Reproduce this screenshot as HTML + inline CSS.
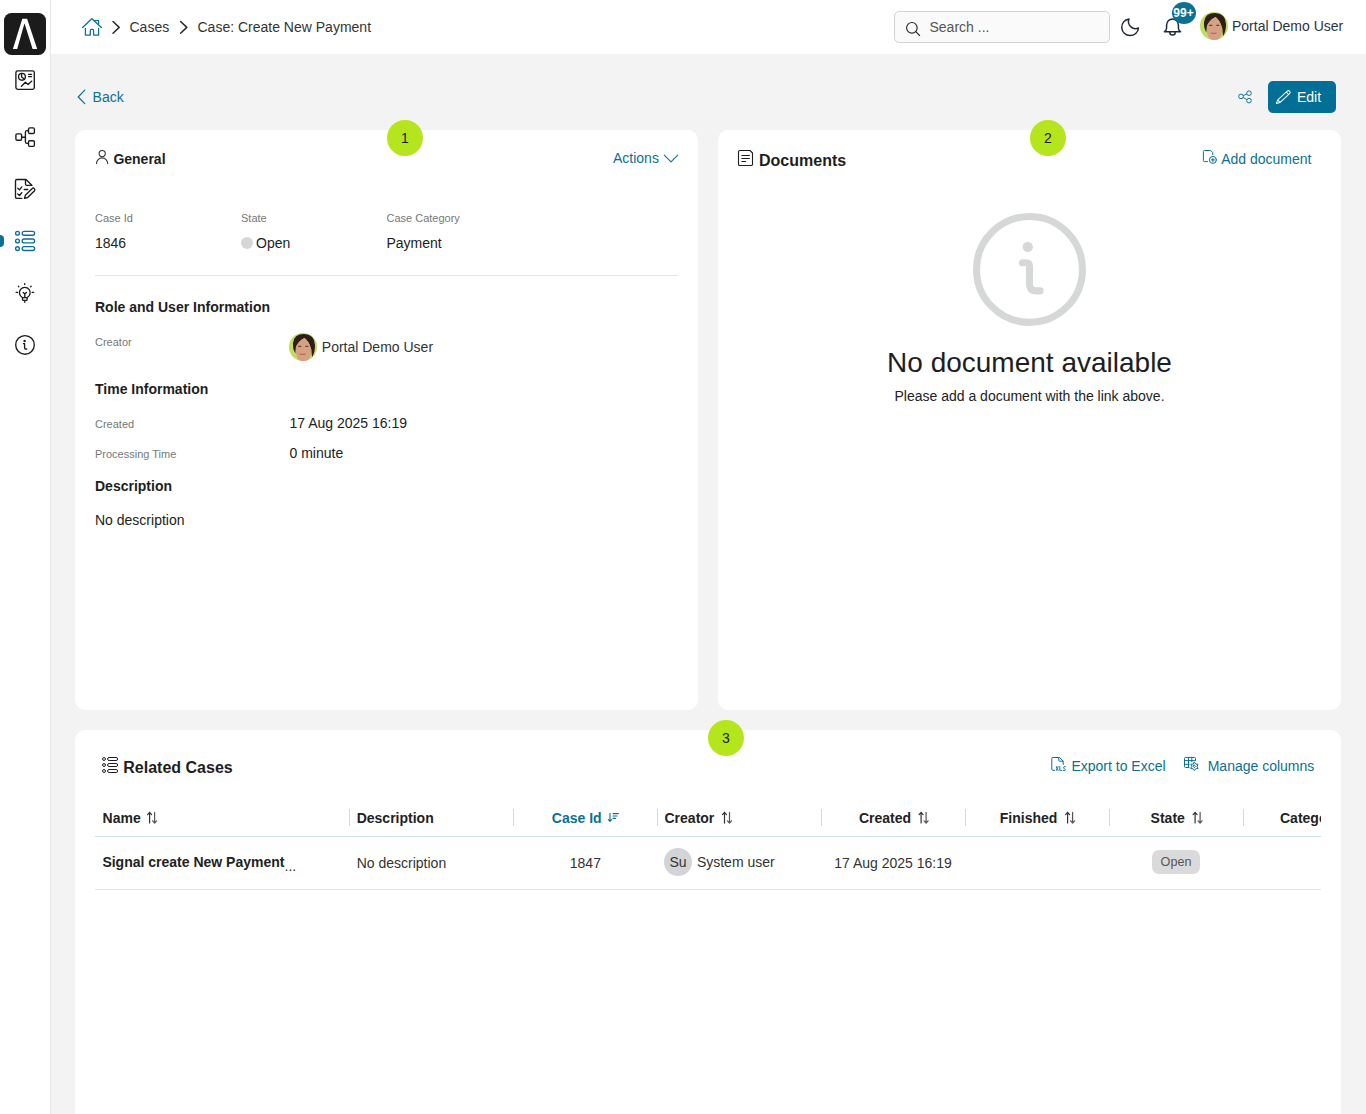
<!DOCTYPE html>
<html><head><meta charset="utf-8">
<style>
*{box-sizing:border-box;margin:0;padding:0}
html,body{width:1366px;height:1114px;overflow:hidden}
body{background:#f3f3f3;font-family:"Liberation Sans",sans-serif;color:#222;position:relative}
.a{position:absolute;white-space:nowrap}
.t14{font-size:14px;line-height:16px}
.t11{font-size:11px;line-height:13px;color:#777}
.t16{font-size:16px;line-height:18px}
.b{font-weight:bold}
.teal{color:#0b7095}
#side{position:absolute;left:0;top:0;width:51px;height:1114px;background:#fff;border-right:1px solid #e6e6e6}
#hdr{position:absolute;left:51px;top:0;width:1315px;height:54px;background:#fff}
.card{position:absolute;background:#fff;border-radius:10px}
.num{position:absolute;width:36px;height:36px;border-radius:50%;background:#b5e61d;color:#1a1a1a;font-size:14px;line-height:36px;text-align:center}
svg{position:absolute;overflow:visible}
.sep{position:absolute;top:809px;width:1px;height:17px;background:#d5d9de}
</style></head>
<body>
<!-- sidebar -->
<div id="side"></div>
<div id="hdr"></div>
<!-- logo -->
<svg style="left:0;top:0" width="51" height="60" viewBox="0 0 51 60">
<rect x="4" y="13" width="42" height="42" rx="7.5" fill="#1b1b1b"/>
<path d="M12.9 49 L22.3 18.8 H27.1 L37.2 49 H32.6 L24.5 23.2 L17.2 49 Z" fill="#fff"/>
</svg>
<!-- sidebar icons -->
<svg style="left:0;top:60px" width="51" height="310" viewBox="0 60 51 310" fill="none" stroke="#1b1b1b" stroke-width="1.35" stroke-linecap="round" stroke-linejoin="round">
 <!-- dashboard -->
 <rect x="15.9" y="70.9" width="18.4" height="18.4" rx="1.8"/>
 <circle cx="21.95" cy="76.8" r="3.4"/>
 <path d="M21.6 73.4 V77 L24.5 79.3"/>
 <path d="M28.6 74.4 H31.6 M28.6 76.6 H31.6"/>
 <path d="M21.4 86.3 L25.4 82.3 L28.1 84.5 L31.8 81.1"/>
 <!-- process -->
 <rect x="15.9" y="133.8" width="5.7" height="6.4" rx="1.3"/>
 <rect x="28.5" y="127.9" width="5.9" height="5.6" rx="1.3"/>
 <rect x="28.5" y="140.7" width="5.9" height="5.6" rx="1.3"/>
 <path d="M21.6 137.2 H25.4 M28.5 130.6 H27 Q25.4 130.6 25.4 132.2 V141.8 Q25.4 143.4 27 143.4 H28.5"/>
 <!-- task -->
 <path d="M21.8 198.4 H17 Q15.5 198.4 15.5 196.9 V181 Q15.5 179.5 17 179.5 H26 L31.8 185.3"/>
 <path d="M25.5 179.8 V184 Q25.5 185.3 26.8 185.3 H31.8"/>
 <path d="M17.8 188.3 L19.5 189.8 L21.8 186.9 M17.8 194 L19.5 195.5 L21.8 192.6 M24.2 189.5 H27.8"/>
 <g transform="translate(24.5 198.3) rotate(-44.4)"><path d="M0 0 L2.8 -1.65 H12.1 Q13.8 -1.65 13.8 0 Q13.8 1.65 12.1 1.65 H2.8 Z"/></g>
 <!-- bulb -->
 <path d="M22.5 297.6 A5.4 5.4 0 1 1 27.1 297.6"/>
 <path d="M23.3 292.4 L24.8 293.9 L26.4 292.4 M24.8 293.9 V297.4"/>
 <rect x="22.5" y="297.6" width="4.6" height="2.8" rx="0.9"/>
 <path d="M24.8 301.5 V302.2 M16.2 292.4 H17.6 M32.2 292.4 H33.6 M24.7 283.6 V284.4 M18.4 286.3 L18.8 286.7 M31.1 286.3 L30.7 286.7"/>
 <!-- info -->
 <circle cx="25" cy="344.9" r="9.3"/>
 <circle cx="24.6" cy="341" r="0.5" fill="#1b1b1b"/>
 <path d="M23.4 343.6 H24.6 V348 Q24.6 349 25.6 349 H26.7"/>
</svg>
<!-- active list icon -->
<div class="a" style="left:0;top:235px;width:4px;height:12px;background:#0b7095;border-radius:0 4px 4px 0"></div>
<svg style="left:0;top:225px" width="51" height="30" viewBox="0 225 51 30" fill="none" stroke="#0b7095" stroke-width="1.35">
 <circle cx="17.5" cy="233.2" r="1.9"/><circle cx="17.5" cy="241" r="1.9"/><circle cx="17.5" cy="248.6" r="1.9"/>
 <rect x="22.2" y="231.3" width="12.4" height="3.9" rx="1.95"/>
 <rect x="22.2" y="239" width="12.4" height="3.9" rx="1.95"/>
 <rect x="22.2" y="246.6" width="12.4" height="3.9" rx="1.95"/>
</svg>

<!-- header content -->
<svg style="left:80px;top:15px" width="26" height="24" viewBox="80 15 26 24" fill="none" stroke="#0b7095" stroke-width="1.25" stroke-linecap="round" stroke-linejoin="round">
 <path d="M82.6 27.5 L91.8 18.7 L101.4 27.5"/>
 <path d="M94.7 20.7 H98.6 V24.3"/>
 <path d="M85.4 28.4 V35.1 H90.3 V30.6 Q90.3 29.4 91.5 29.4 H92.4 Q93.6 29.4 93.6 30.6 V35.1 H98.6 V28.4"/>
</svg>
<svg style="left:108px;top:18px" width="84" height="20" viewBox="108 18 84 20" fill="none" stroke="#2b2b2b" stroke-width="1.5" stroke-linecap="round" stroke-linejoin="round">
 <path d="M113 21.5 L119.2 27.4 L113 33.3"/>
 <path d="M180.6 21.5 L186.8 27.4 L180.6 33.3"/>
</svg>
<div class="a t14" style="left:129.5px;top:19px;color:#333">Cases</div>
<div class="a t14" style="left:197.5px;top:19px;color:#333">Case: Create New Payment</div>

<div class="a" style="left:894px;top:11px;width:216px;height:32px;border:1px solid #d3d3d3;border-radius:5px;background:#fafafa"></div>
<svg style="left:900px;top:18px" width="26" height="24" viewBox="900 18 26 24" fill="none" stroke="#2a2a2a" stroke-width="1.15" stroke-linecap="round">
 <circle cx="911.9" cy="27.8" r="5.3"/><path d="M915.8 31.7 L919.6 35.5"/>
</svg>
<div class="a t14" style="left:929.5px;top:19px;color:#555">Search ...</div>

<svg style="left:1116px;top:14px" width="28" height="26" viewBox="1116 14 28 26" fill="none" stroke="#1f2a37" stroke-width="1.5" stroke-linecap="round" stroke-linejoin="round">
 <path d="M1129 18.9 A8.4 8.4 0 1 0 1138.5 28 A7.1 7.1 0 0 1 1129 18.9 Z"/>
</svg>
<svg style="left:1160px;top:14px" width="26" height="26" viewBox="1160 14 26 26" fill="none" stroke="#1f2a37" stroke-width="1.5" stroke-linecap="round" stroke-linejoin="round">
 <path d="M1164.4 31.7 Q1166.4 30.8 1166.6 28 V25 A5.9 6.1 0 0 1 1178.4 25 V28 Q1178.6 30.8 1180.6 31.7 Z"/>
 <path d="M1169.8 32.4 A2.7 2.6 0 0 0 1175.2 32.4"/>
</svg>
<div class="a" style="left:1172px;top:2px;width:24px;height:22px;border-radius:50%;background:#0b7095;color:#fff;font-size:12px;line-height:22px;text-align:center;font-weight:bold;text-indent:-1px">99+</div>

<svg style="left:1200px;top:12px" width="28" height="28" viewBox="0 0 28 28">
 <defs><clipPath id="av1"><circle cx="14" cy="14" r="14"/></clipPath></defs>
 <g clip-path="url(#av1)">
 <rect width="28" height="28" fill="#c2dc62"/>
 <path d="M3.9 10.4 Q5 1 15 1.1 Q25.5 1.5 26 12 Q26 20 23 24 L22.3 16.8 Q20 8 15.5 4.9 Q9 8 6.9 14.5 L6.3 20.6 Q3.6 16 3.9 10.4 Z" fill="#2c1e18"/>
 <path d="M15.5 4.9 Q9 8 6.9 14.5 Q6.6 24 10 27 Q14 29.5 18 28 Q22 25 22.3 16.8 Q20 8 15.5 4.9 Z" fill="#d6a083"/>
 <path d="M9.8 13.3 H11.8 M16.8 13.3 H18.8" stroke="#5e4538" stroke-width="1.3" stroke-linecap="round"/>
 <path d="M11.2 21 Q13.6 22 16.2 21" stroke="#b06a5e" stroke-width="1.2" fill="none" stroke-linecap="round"/>
 </g>
</svg>
<div class="a t14" style="left:1232px;top:18px;color:#2b3544">Portal Demo User</div>

<!-- Back / Edit -->
<svg style="left:74px;top:86px" width="16" height="22" viewBox="74 86 16 22" fill="none" stroke="#0b7095" stroke-width="1.2" stroke-linecap="round" stroke-linejoin="round">
 <path d="M84.8 90.2 L78.2 97 L84.8 103.6"/>
</svg>
<div class="a t14 teal" style="left:92.6px;top:89px">Back</div>

<svg style="left:1234px;top:86px" width="22" height="22" viewBox="1234 86 22 22" fill="none" stroke="#0b7095" stroke-width="0.95">
 <circle cx="1241" cy="96.4" r="2.3"/><circle cx="1249" cy="93.2" r="2.3"/><circle cx="1249" cy="100.6" r="2.3"/>
 <path d="M1243.1 95.5 L1246.9 94.1 M1243.1 97.4 L1246.9 99.6"/>
</svg>
<div class="a" style="left:1268px;top:81px;width:68px;height:32px;border-radius:5px;background:#016f96"></div>
<svg style="left:1272px;top:86px" width="22" height="22" viewBox="1272 86 22 22" fill="none" stroke="#fff" stroke-width="1" stroke-linejoin="round">
 <g transform="translate(1276.4 103.4) rotate(-42.3)"><path d="M0 0 L3.4 -1.75 H16.3 Q18 -1.75 18 0 Q18 1.75 16.3 1.75 H3.4 Z M15 -1.75 V1.75 M3.4 -1.75 V1.75"/></g>
</svg>
<div class="a t14" style="left:1297px;top:89px;color:#fff">Edit</div>

<!-- cards -->
<div class="card" style="left:75px;top:130px;width:623px;height:580px"></div>
<div class="card" style="left:718px;top:130px;width:623px;height:580px"></div>
<div class="card" style="left:75px;top:730px;width:1266px;height:400px"></div>

<!-- card 1 content -->
<svg style="left:94px;top:148px" width="16" height="18" viewBox="94 148 16 18" fill="none" stroke="#333" stroke-width="1.1" stroke-linecap="round">
 <circle cx="102.2" cy="153.6" r="3.1"/>
 <path d="M96.5 163.5 A5.6 5.6 0 0 1 107.7 163.5"/>
</svg>
<div class="a t14 b" style="left:113.4px;top:151px;color:#1e1e1e">General</div>
<div class="a t14 teal" style="left:613px;top:150px">Actions</div>
<svg style="left:662px;top:150px" width="18" height="16" viewBox="662 150 18 16" fill="none" stroke="#0b7095" stroke-width="1.1" stroke-linecap="round" stroke-linejoin="round">
 <path d="M664.3 155.2 L671 161.8 L677.7 155.2"/>
</svg>

<div class="a t11" style="left:95px;top:211.6px">Case Id</div>
<div class="a t11" style="left:241px;top:211.6px">State</div>
<div class="a t11" style="left:386.5px;top:211.6px">Case Category</div>
<div class="a t14" style="left:95px;top:235px">1846</div>
<div class="a" style="left:241px;top:237px;width:12px;height:12px;border-radius:50%;background:#d6d6d6"></div>
<div class="a t14" style="left:256px;top:235px">Open</div>
<div class="a t14" style="left:386.5px;top:235px">Payment</div>
<div class="a" style="left:95px;top:275px;width:583px;height:1px;background:#e3e6e8"></div>

<div class="a t14 b" style="left:95px;top:298.6px;color:#1e1e1e">Role and User Information</div>
<div class="a t11" style="left:95px;top:335.8px">Creator</div>
<svg style="left:289px;top:333px" width="28" height="28" viewBox="0 0 28 28">
 <defs><clipPath id="av2"><circle cx="14" cy="14" r="14"/></clipPath></defs>
 <g clip-path="url(#av2)">
 <rect width="28" height="28" fill="#c2dc62"/>
 <path d="M3.9 10.4 Q5 1 15 1.1 Q25.5 1.5 26 12 Q26 20 23 24 L22.3 16.8 Q20 8 15.5 4.9 Q9 8 6.9 14.5 L6.3 20.6 Q3.6 16 3.9 10.4 Z" fill="#2c1e18"/>
 <path d="M15.5 4.9 Q9 8 6.9 14.5 Q6.6 24 10 27 Q14 29.5 18 28 Q22 25 22.3 16.8 Q20 8 15.5 4.9 Z" fill="#d6a083"/>
 <path d="M9.8 13.3 H11.8 M16.8 13.3 H18.8" stroke="#5e4538" stroke-width="1.3" stroke-linecap="round"/>
 <path d="M11.2 21 Q13.6 22 16.2 21" stroke="#b06a5e" stroke-width="1.2" fill="none" stroke-linecap="round"/>
 </g>
</svg>
<div class="a t14" style="left:321.8px;top:339px;color:#333">Portal Demo User</div>

<div class="a t14 b" style="left:95px;top:381px;color:#1e1e1e">Time Information</div>
<div class="a t11" style="left:95px;top:417.5px">Created</div>
<div class="a t14" style="left:289.5px;top:415px">17 Aug 2025 16:19</div>
<div class="a t11" style="left:95px;top:447.6px">Processing Time</div>
<div class="a t14" style="left:289.5px;top:445px">0 minute</div>
<div class="a t14 b" style="left:95px;top:478px;color:#1e1e1e">Description</div>
<div class="a t14" style="left:95px;top:512px">No description</div>

<!-- card 2 content -->
<svg style="left:736px;top:148px" width="20" height="20" viewBox="736 148 20 20" fill="none" stroke="#1e1e1e" stroke-width="1.1" stroke-linejoin="round">
 <path d="M739.8 150.5 H750 L752.5 153 V164.2 Q752.5 165.5 751.2 165.5 H739.8 Q738.5 165.5 738.5 164.2 V151.8 Q738.5 150.5 739.8 150.5 Z"/>
 <path d="M741.8 155.5 H749.4 M741.8 158.5 H749.4 M741.8 161.5 H745.6" stroke-linecap="round"/>
</svg>
<div class="a t16 b" style="left:759px;top:152.2px;color:#1e1e1e">Documents</div>
<svg style="left:1200px;top:147px" width="20" height="20" viewBox="1200 147 20 20" fill="none" stroke="#0b7095" stroke-width="1" stroke-linecap="round" stroke-linejoin="round">
 <path d="M1207.5 161.6 H1204.5 Q1203.4 161.6 1203.4 160.5 V151.6 Q1203.4 150.5 1204.5 150.5 H1210.7 L1212.7 152.5 V154.6"/>
 <circle cx="1212.9" cy="159.9" r="3.5"/>
 <path d="M1212.9 158.3 V161.5 M1211.3 159.9 H1214.5"/>
</svg>
<div class="a t14 teal" style="left:1221.2px;top:151px">Add document</div>

<svg style="left:973px;top:213px" width="114" height="114" viewBox="973.6 213.8 113 113" fill="none" stroke="#d6d8d7" stroke-width="7" stroke-linecap="round" stroke-linejoin="round">
 <circle cx="1029.6" cy="269.7" r="52.5"/>
 <circle cx="1027.9" cy="247.4" r="5.1" fill="#d6d8d7" stroke="none"/>
 <path d="M1022.6 263.2 H1026.2 Q1029.6 263.2 1029.6 266.6 V284 Q1029.6 291 1036 291 H1040.1"/>
</svg>
<div class="a" style="left:718px;top:347.3px;width:623px;text-align:center;font-size:28px;line-height:32px;color:#1e1e1e">No document available</div>
<div class="a t14" style="left:718px;top:388px;width:623px;text-align:center">Please add a document with the link above.</div>

<!-- card 3 content -->
<svg style="left:100px;top:755px" width="20" height="20" viewBox="100 755 20 20" fill="none" stroke="#1e1e1e" stroke-width="1" >
 <circle cx="104" cy="759" r="1.45"/><circle cx="104" cy="765" r="1.45"/><circle cx="104" cy="771" r="1.45"/>
 <rect x="107.6" y="757.5" width="10" height="3" rx="1.5"/>
 <rect x="107.6" y="763.5" width="10" height="3" rx="1.5"/>
 <rect x="107.6" y="769.5" width="10" height="3" rx="1.5"/>
</svg>
<div class="a t16 b" style="left:123.3px;top:758.6px;color:#1e1e1e">Related Cases</div>

<svg style="left:1048px;top:754px" width="22" height="20" viewBox="1048 754 22 20" fill="none" stroke="#0b7095" stroke-width="1" stroke-linecap="round" stroke-linejoin="round">
 <path d="M1054.6 770.3 H1052.8 Q1051.8 770.3 1051.8 769.3 V758.5 Q1051.8 757.5 1052.8 757.5 H1059.6 L1063.2 761.2 V764.5"/>
 <path d="M1058.8 758 V760.4 Q1058.8 761.2 1059.6 761.2 H1063"/>
 <path d="M1056.4 766.5 Q1057.8 768.5 1056.4 770.5 M1058 766.5 Q1056.6 768.5 1058 770.5 M1059.8 766.5 V770.4 H1061.8 M1065.4 766.7 Q1063.3 766.2 1063.4 767.7 Q1063.6 768.5 1064.6 768.8 Q1065.8 769.3 1065.2 770.3 Q1064.5 770.8 1063.3 770.4" stroke-width="0.95"/>
</svg>
<div class="a t14 teal" style="left:1071.4px;top:758px">Export to Excel</div>
<svg style="left:1182px;top:754px" width="20" height="20" viewBox="1182 754 20 20" fill="none" stroke="#0b7095" stroke-width="1" stroke-linejoin="round" stroke-linecap="round">
 <path d="M1189 767.5 H1185.6 Q1184.5 767.5 1184.5 766.4 V758.5 Q1184.5 757.4 1185.6 757.4 H1194.4 Q1195.5 757.4 1195.5 758.5 V760.6 H1184.5 M1184.5 764.3 H1189.2 M1188.5 757.4 V767.5 M1191.8 757.4 V761.6"/>
 <path d="M1194.40 762.20 L1195.75 764.06 L1198.04 764.30 L1197.10 766.40 L1198.04 768.50 L1195.75 768.74 L1194.40 770.60 L1193.05 768.74 L1190.76 768.50 L1191.70 766.40 L1190.76 764.30 L1193.05 764.06 Z" fill="#fff"/>
 <path d="M1194.4 765.1 L1195.7 766.4 L1194.4 767.7 L1193.1 766.4 Z"/>
</svg>
<div class="a t14 teal" style="left:1207.7px;top:758px">Manage columns</div>

<!-- table -->
<div class="a" style="left:95px;top:836px;width:1226px;height:1px;background:#cfe2ea"></div>
<div class="a" style="left:95px;top:889px;width:1226px;height:1px;background:#e4e4e4"></div>
<div class="sep" style="left:349px"></div>
<div class="sep" style="left:513px"></div>
<div class="sep" style="left:657px"></div>
<div class="sep" style="left:821px"></div>
<div class="sep" style="left:965px"></div>
<div class="sep" style="left:1109px"></div>
<div class="sep" style="left:1243px"></div>

<div class="a t14 b" style="left:102.6px;top:810px;color:#222">Name</div>
<svg style="left:146px;top:811px" width="13" height="14" viewBox="146 811 13 14" fill="none" stroke-width="1.2" stroke-linecap="round" stroke-linejoin="round">
 <path d="M149.6 823 V812.4 M147.6 814.6 L149.6 812.4 L151.6 814.6" stroke="#333"/>
 <path d="M154.6 812.4 V823 M152.6 820.8 L154.6 823 L156.6 820.8" stroke="#555"/>
</svg>
<div class="a t14 b" style="left:356.7px;top:810px;color:#222">Description</div>
<div class="a t14 b" style="left:551.8px;top:810px;color:#0b7095">Case Id</div>
<svg style="left:606px;top:811px" width="14" height="13" viewBox="606 811 14 13" fill="none" stroke="#0b7095" stroke-width="1.1" stroke-linecap="round" stroke-linejoin="round">
 <path d="M610 813.2 V821.2 M608.4 819.6 L610 821.4 L611.6 819.6 M613 813.6 H618.4 M613 816 H617 M613 818.4 H615.6"/>
</svg>
<div class="a t14 b" style="left:664.5px;top:810px;color:#222">Creator</div>
<div class="a t14 b" style="left:858.9px;top:810px;color:#222">Created</div>
<div class="a t14 b" style="left:999.8px;top:810px;color:#222">Finished</div>
<div class="a t14 b" style="left:1150.6px;top:810px;color:#222">State</div>
<div class="a t14 b" style="left:1280px;top:810px;width:41px;overflow:hidden;color:#222">Category</div>
<svg style="left:0;top:0" width="1366" height="1114" viewBox="0 0 1366 1114" fill="none" stroke-width="1.2" stroke-linecap="round" stroke-linejoin="round">
 <g transform="translate(574.9 0)"><path d="M149.6 823 V812.4 M147.6 814.6 L149.6 812.4 L151.6 814.6" stroke="#333"/><path d="M154.6 812.4 V823 M152.6 820.8 L154.6 823 L156.6 820.8" stroke="#555"/></g>
 <g transform="translate(771.5 0)"><path d="M149.6 823 V812.4 M147.6 814.6 L149.6 812.4 L151.6 814.6" stroke="#333"/><path d="M154.6 812.4 V823 M152.6 820.8 L154.6 823 L156.6 820.8" stroke="#555"/></g>
 <g transform="translate(918 0)"><path d="M149.6 823 V812.4 M147.6 814.6 L149.6 812.4 L151.6 814.6" stroke="#333"/><path d="M154.6 812.4 V823 M152.6 820.8 L154.6 823 L156.6 820.8" stroke="#555"/></g>
 <g transform="translate(1045.5 0)"><path d="M149.6 823 V812.4 M147.6 814.6 L149.6 812.4 L151.6 814.6" stroke="#333"/><path d="M154.6 812.4 V823 M152.6 820.8 L154.6 823 L156.6 820.8" stroke="#555"/></g>
</svg>

<div class="a t14 b" style="left:102.4px;top:854px;color:#222">Signal create New Payment</div>
<div class="a t14" style="left:284.6px;top:858px;color:#333">...</div>
<div class="a t14" style="left:356.7px;top:855px;color:#333">No description</div>
<div class="a t14" style="left:569.8px;top:855px;color:#333">1847</div>
<div class="a" style="left:664px;top:848px;width:28px;height:28px;border-radius:50%;background:#d3d4d8;color:#333;font-size:14px;line-height:28px;text-align:center">Su</div>
<div class="a t14" style="left:696.9px;top:854px;color:#333">System user</div>
<div class="a t14" style="left:834.2px;top:855px;color:#333">17 Aug 2025 16:19</div>
<div class="a" style="left:1152px;top:850px;width:48px;height:24px;border-radius:7px;background:#dadada;color:#555;font-size:12.6px;line-height:24px;text-align:center">Open</div>

<div class="num" style="left:387px;top:120px">1</div>
<div class="num" style="left:1030px;top:120px">2</div>
<div class="num" style="left:708px;top:720px">3</div>

</body></html>
